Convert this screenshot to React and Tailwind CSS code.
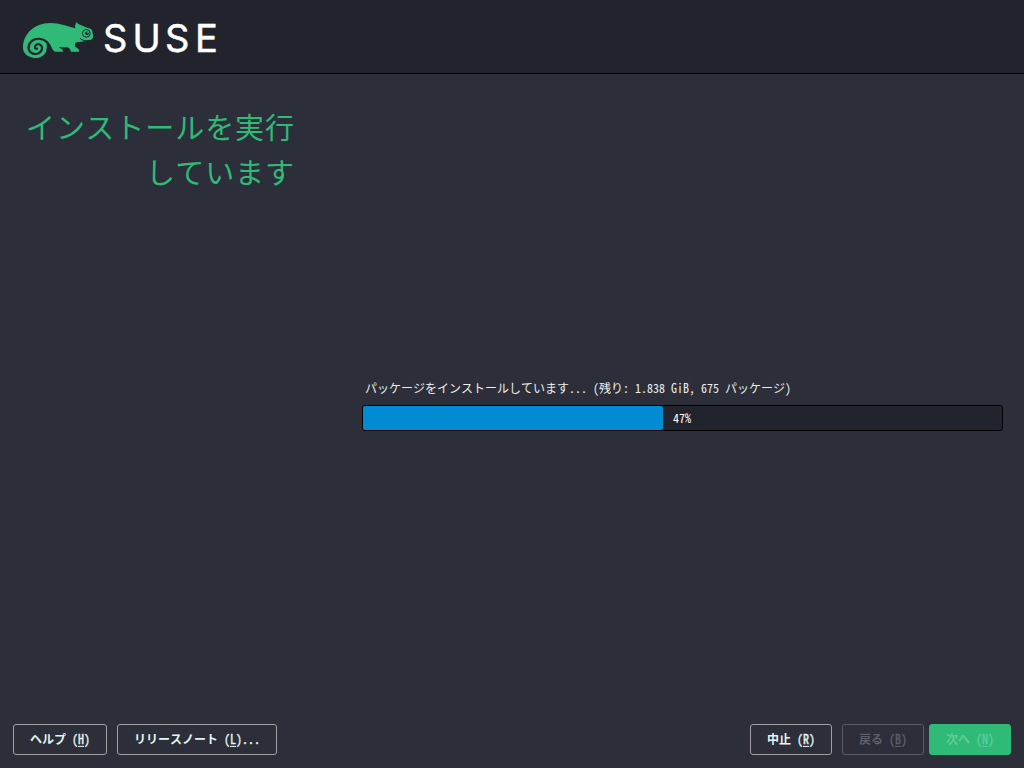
function Chameleon() {
  return (
    <svg className="h-[50px] w-[85px] shrink-0" viewBox="0 0 255 150" aria-hidden="true">
      <path
        fill="#30ba78"
        d="M24 97C24 58 58 24 105 24C136 24 157 34 181 40Q179 31 183 23Q186 22 190 27L216 38Q231 40 232 49L235 66Q232 76 214 78Q195 80 185 82Q178 84 180 93Q181 98 187 99Q193 102 193 110H168Q166 100 158 97H132Q130 99 136 100Q144 102 145 110H120Q113 107 109 96Q105 82 94 80Q98 96 93 110C85 127 67 131 54 128C34 124 24 113 24 97Z"
      />
      <path
        d="M98 83C84 69 60 67 48 80C36 93 39 111 54 116C69 120 83 110 81 97C79 87 68 84 62 91C57 97 61 102 66 101"
        fill="none"
        stroke="#21242d"
        strokeWidth="6.5"
        strokeLinecap="round"
      />
      <circle cx="214" cy="55" r="11.5" fill="none" stroke="#21242d" strokeWidth="3" />
      <circle cx="216" cy="55" r="5.5" fill="#21242d" />
      <ellipse cx="218" cy="53" rx="3" ry="2" fill="#30ba78" />
      <path d="M195 70Q205 80 224 76" fill="none" stroke="#21242d" strokeWidth="3" />
    </svg>
  );
}

function Latin({ children, className = "" }) {
  return (
    <span className={`inline-block origin-bottom scale-y-106 whitespace-pre ${className}`}>
      {children}
    </span>
  );
}

function ActionButton({ label, accessKey, suffix = "", className }) {
  return (
    <button
      className={`flex h-[31px] items-center justify-center rounded-[3px] border pb-[1px] text-[12px] font-bold whitespace-pre ${className}`}
    >
      <span>
        {label}
        <Latin className="font-medium [-webkit-text-stroke:0.35px_currentColor]">
          {" ("}
          <span className="underline decoration-1 underline-offset-2">{accessKey}</span>
          {")"}
          {suffix}
        </Latin>
      </span>
    </button>
  );
}

export default function App() {
  return (
    <div className="flex h-[768px] w-[1024px] flex-col overflow-hidden bg-[#2c2e39] font-['Noto_Sans_Mono_CJK_JP','Noto_Sans_CJK_JP',monospace] text-white">
      <header className="flex h-[74px] shrink-0 border-b border-black bg-[#21242d] pt-[15px] pl-[15px]">
        <Chameleon />
        <svg className="h-[50px] w-[130px]" viewBox="0 0 130 50">
          <text
            x="3 32.5 65 95"
            y="37"
            fill="#fff"
            stroke="#fff"
            strokeWidth="0.5"
            strokeLinejoin="round"
            className="font-['Inter',sans-serif] text-[38px]"
          >
            SUSE
          </text>
        </svg>
      </header>

      <main className="flex flex-1 pr-[21px] pl-[24px]">
        <h1 className="w-[271px] shrink-0 pt-[30px] text-right font-['Noto_Sans_CJK_JP',sans-serif] text-[29px] leading-[45px] font-normal tracking-[0.95px] text-[#30ba78]">
          インストールを実行
          <br />
          しています
        </h1>
        <section className="ml-[67px] flex-1 pt-[304px]">
          <p className="pl-[3px] text-[12px] leading-[20px] whitespace-pre text-[#eeeeee]">
            パッケージをインストールしています<Latin>{"... ("}</Latin>残り<Latin>{": 1.838 GiB, 675 "}</Latin>パッケージ<Latin>{")"}</Latin>
          </p>
          <div className="mt-[7px] flex h-[26px] items-center rounded-[3px] border border-black bg-[#21242d]">
            <div className="h-full w-[300px] rounded-[2px] bg-[#008bd2]" />
            <span className="pl-[10px] text-[12px] leading-none">
              <Latin>47%</Latin>
            </span>
          </div>
        </section>
      </main>

      <footer className="flex h-[44px] shrink-0 pr-[13px] pl-[13px]">
        <ActionButton label="ヘルプ" accessKey="H" className="w-[94px] border-[#a0a0a0] text-[#e4f4f0]" />
        <ActionButton
          label="リリースノート"
          accessKey="L"
          suffix="..."
          className="ml-[10px] w-[160px] border-[#a0a0a0] text-[#e4f4f0]"
        />
        <ActionButton label="中止" accessKey="R" className="ml-auto w-[82px] border-[#a0a0a0] text-[#e4f4f0]" />
        <ActionButton label="戻る" accessKey="B" className="ml-[10px] w-[82px] border-[#595b63] text-[#5c5f68]" />
        <ActionButton
          label="次へ"
          accessKey="N"
          className="ml-[5px] w-[82px] border-[#30ba78] bg-[#30ba78] text-[#60cc98]"
        />
      </footer>
    </div>
  );
}
